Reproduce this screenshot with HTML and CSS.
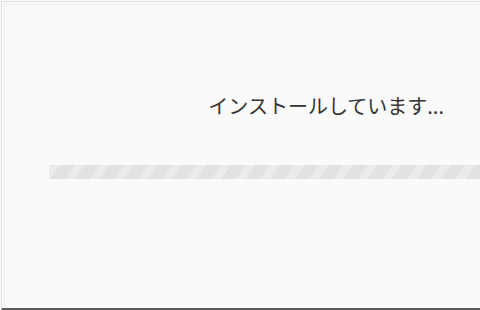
FILE: index.html
```html
<!DOCTYPE html>
<html lang="ja">
  <head>
    <meta charset="UTF-8" />
    <title>インストール</title>
    <link rel="stylesheet" href="styles.css">
  </head>
  <body>
    <div class="frame">
      <div class="inner">
        <p class="status">インストールしています...</p>
        <div class="progress"><div class="bar"></div></div>
      </div>
    </div>
  </body>
</html>
```

FILE: styles.css
```css
* {
  box-sizing: border-box;
  margin: 0;
  padding: 0;
}

html,
body {
  width: 480px;
  height: 310px;
  overflow: hidden;
}

body {
  background-color: #fafafa;
  font-family: "Noto Sans CJK JP", "Noto Sans", sans-serif;
}

.frame {
  height: 310px;
  border-top: 1px solid #e2e2e2;
  border-left: 1px solid #e2e2e2;
  border-bottom: 3px solid #5a5a5a;
  margin-top: 1px;
  margin-left: 1px;
  padding: 2px 0 0 2px;
}

.inner {
  height: 100%;
  border-top: 1px solid #ececec;
  border-left: 1px solid #ececec;
  padding-top: 87px;
}

.status {
  text-align: right;
  padding-right: 36px;
  font-size: 20px;
  line-height: 28px;
  color: #333;
}

.progress {
  margin-top: 45px;
  margin-left: 44px;
  height: 14px;
  background-color: #e2e2e2;
}

.bar {
  height: 100%;
  background-image: repeating-linear-gradient(
    -55deg,
    #e2e2e2 0,
    #e2e2e2 12px,
    #ebebeb 12px,
    #ebebeb 20px
  );
}
```
